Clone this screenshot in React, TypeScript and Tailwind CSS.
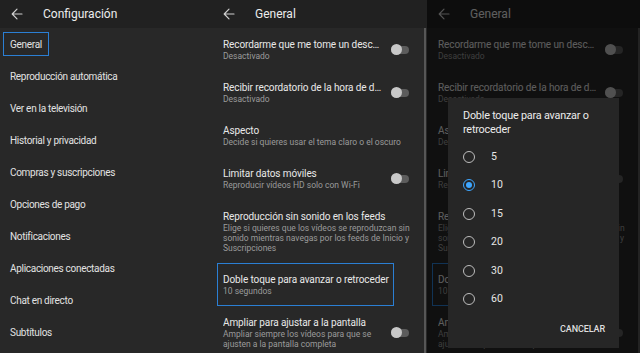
import React from "react"

const menu = [
  "General",
  "Reproducción automática",
  "Ver en la televisión",
  "Historial y privacidad",
  "Compras y suscripciones",
  "Opciones de pago",
  "Notificaciones",
  "Aplicaciones conectadas",
  "Chat en directo",
  "Subtítulos",
]

type Setting = {
  title: string
  lines: string[]
  toggle?: boolean
  active?: boolean
}

const settings: Setting[] = [
  { title: "Recordarme que me tome un descanso", lines: ["Desactivado"], toggle: true },
  { title: "Recibir recordatorio de la hora de dormir", lines: ["Desactivado"], toggle: true },
  { title: "Aspecto", lines: ["Decide si quieres usar el tema claro o el oscuro"] },
  { title: "Limitar datos móviles", lines: ["Reproducir vídeos HD solo con Wi-Fi"], toggle: true },
  {
    title: "Reproducción sin sonido en los feeds",
    lines: [
      "Elige si quieres que los vídeos se reproduzcan sin",
      "sonido mientras navegas por los feeds de Inicio y",
      "Suscripciones",
    ],
  },
  { title: "Doble toque para avanzar o retroceder", lines: ["10 segundos"], active: true },
  {
    title: "Ampliar para ajustar a la pantalla",
    lines: ["Ampliar siempre los vídeos para que se", "ajusten a la pantalla completa"],
    toggle: true,
  },
]

const options = ["5", "10", "15", "20", "30", "60"]

const BackArrow = () => (
  <svg width="12" height="12" viewBox="0 0 12 12" fill="none" stroke="#cfcfcf" strokeWidth="1.2" strokeLinecap="round" strokeLinejoin="round">
    <path d="M11 6H1.2M6 1.2 1.2 6 6 10.8" />
  </svg>
)

const Header = ({ title }: { title: string }) => (
  <div className="flex h-[28px] shrink-0 items-center bg-[#212121]">
    <div className="ml-[11px]">
      <BackArrow />
    </div>
    <span className="ml-[20px] text-[12px] text-[#ececec]">{title}</span>
  </div>
)

const Toggle = () => (
  <div className="relative h-[8px] w-[18px] shrink-0 rounded-full bg-[#5c5c5c]">
    <div className="absolute top-[-1.5px] left-0 size-[11px] rounded-full bg-[#c8c8c8]" />
  </div>
)

const SettingRow = ({ item }: { item: Setting }) => (
  <div
    className={
      item.active
        ? "ml-[5px] mr-[30px] flex items-center border border-[#2b7fd4] py-[9px] pl-[5px]"
        : "flex items-center py-[10px] pl-[11px] pr-[15px]"
    }
  >
    <div className="min-w-0 flex-1">
      <div
        className={
          item.toggle
            ? "w-[160px] truncate text-[10px] leading-[13px] tracking-[-0.1px] text-[#e8e8e8]"
            : "whitespace-nowrap text-[10px] leading-[13px] tracking-[-0.1px] text-[#e8e8e8]"
        }
      >
        {item.title}
      </div>
      {item.lines.map((l) => (
        <div key={l} className="whitespace-nowrap text-[8.5px] leading-[10px] text-[#9b9b9b]">
          {l}
        </div>
      ))}
    </div>
    {item.toggle && <Toggle />}
  </div>
)

const GeneralScreen = () => (
  <div className="flex h-full flex-col bg-[#282828]">
    <Header title="General" />
    <div className="flex flex-1 overflow-hidden">
      <div className="min-w-0 flex-1">
        {settings.map((s) => (
          <SettingRow key={s.title} item={s} />
        ))}
      </div>
      <div className="mr-[1px] w-[2.5px] bg-[#575757]" />
    </div>
  </div>
)

const Radio = ({ on }: { on: boolean }) =>
  on ? (
    <div className="flex size-[12px] items-center justify-center rounded-full border-[1.5px] border-[#3ea6ff]">
      <div className="size-[6px] rounded-full bg-[#3ea6ff]" />
    </div>
  ) : (
    <div className="size-[12px] rounded-full border-[1.5px] border-[#bdbdbd]" />
  )

export default function App() {
  return (
    <div className="flex h-[353px] w-[640px] overflow-hidden bg-[#282828] font-['Roboto',sans-serif]">
      {/* Configuración */}
      <div className="flex w-[212px] shrink-0 flex-col">
        <Header title="Configuración" />
        <div className="flex flex-col">
          {menu.map((m, i) => (
            <div key={m} className="flex h-8 items-center">
              {i === 0 ? (
                <span className="ml-[3px] flex h-[24px] items-center border border-[#2b7fd4] px-[6px] text-[10px] tracking-[-0.3px] text-[#e2e2e2]">
                  {m}
                </span>
              ) : (
                <span className="pl-[10px] text-[10px] tracking-[-0.3px] text-[#e2e2e2]">{m}</span>
              )}
            </div>
          ))}
        </div>
      </div>

      {/* General */}
      <div className="w-[215px] shrink-0">
        <GeneralScreen />
      </div>

      {/* General with dialog */}
      <div className="relative min-w-0 flex-1 overflow-hidden">
        <div className="w-[214px]">
          <GeneralScreen />
        </div>
        <div className="absolute inset-0 bg-black/60" />
        <div className="absolute top-[98px] left-[21px] flex h-[250px] w-[171px] flex-col bg-[#262626]">
          <div className="pt-[11px] pl-[15px] pr-[10px] text-[10.8px] leading-[13.5px] tracking-[-0.2px] text-[#ececec]">
            Doble toque para avanzar o<br />
            retroceder
          </div>
          <div className="mt-[6.5px] flex flex-col">
            {options.map((o) => (
              <div key={o} className="flex h-[28.5px] items-center pl-[15px]">
                <Radio on={o === "10"} />
                <span className="ml-[16px] text-[10.5px] text-[#e6e6e6]">{o}</span>
              </div>
            ))}
          </div>
          <div className="mt-auto mb-[6px] flex h-[24px] items-center justify-end pr-[14px]">
            <span className="text-[9px] font-medium tracking-[-0.1px] text-[#dedede]">CANCELAR</span>
          </div>
        </div>
      </div>
    </div>
  )
}
